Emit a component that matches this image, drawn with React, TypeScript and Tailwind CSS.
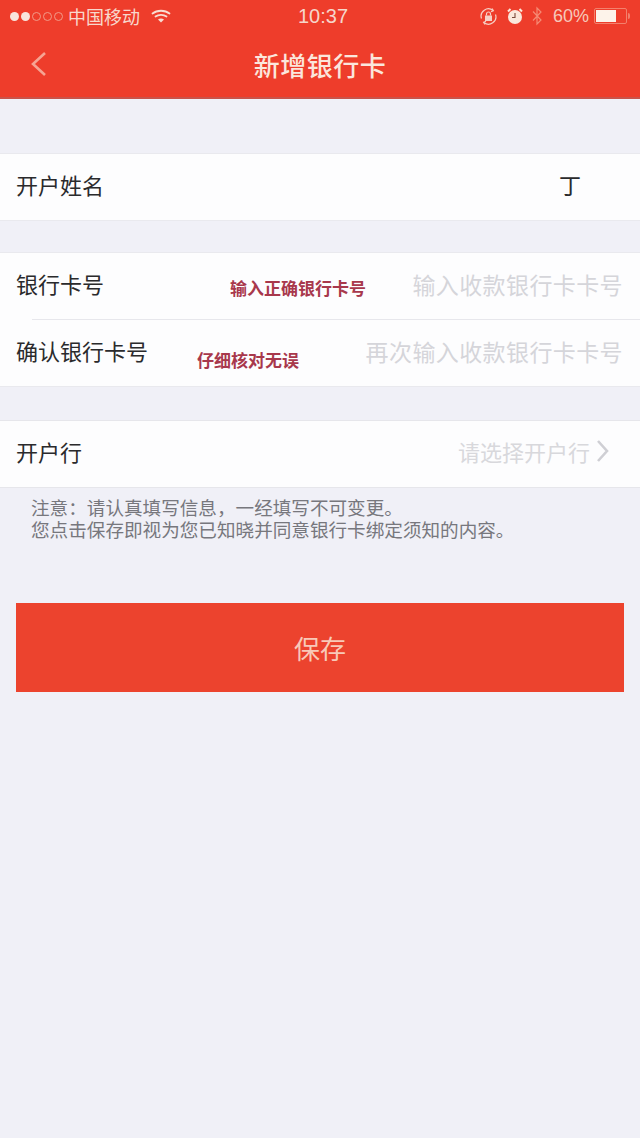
const cjk = { fontFamily: '"Noto Sans CJK SC", "Liberation Sans", sans-serif' };

function Dots() {
  return (
    <div className="flex items-center gap-[2px]">
      {[0, 1].map((i) => (
        <span key={i} className="h-[9px] w-[9px] rounded-full bg-[#f8e4dc]" />
      ))}
      {[2, 3, 4].map((i) => (
        <span key={i} className="h-[9px] w-[9px] rounded-full border border-[#f29a88]" />
      ))}
    </div>
  );
}

function Wifi() {
  return (
    <svg width="20" height="15" viewBox="0 0 20 15" fill="none" stroke="#f8ddd2" strokeWidth="1.8" strokeLinecap="round">
      <path d="M1.5 4.5C6 .8 14 .8 18.5 4.5" />
      <path d="M4.5 7.5C7.5 5.2 12.5 5.2 15.5 7.5" />
      <path d="M10 13.5l-3-3c1.8-1.2 4.2-1.2 6 0z" fill="#f8ddd2" stroke="none" />
    </svg>
  );
}

function RotationLock() {
  return (
    <svg width="19" height="19" viewBox="0 0 19 19" fill="none" stroke="#f6cfc4" strokeWidth="1.2">
      <path d="M2.5 11.5A7.3 7.3 0 0 1 14 3.5" />
      <path d="M16.5 7.5A7.3 7.3 0 0 1 5 15.5" />
      <path d="M13 1.5l1.4 2.2-2.4 1M6 17.5l-1.4-2.2 2.4-1" />
      <rect x="6" y="8.5" width="7" height="5.5" fill="#f6cfc4" stroke="none" />
      <path d="M7.5 8.5V7a2 2 0 0 1 4 0v1.5" />
    </svg>
  );
}

function Alarm() {
  return (
    <svg width="16" height="17" viewBox="0 0 16 17">
      <circle cx="8" cy="9" r="7" fill="#fae8dc" />
      <path d="M1 3.5L3.5 1M15 3.5L12.5 1" stroke="#fae8dc" strokeWidth="2" />
      <path d="M8 5v4.5H5" fill="none" stroke="#7a4a3c" strokeWidth="1.1" />
    </svg>
  );
}

function Bluetooth() {
  return (
    <svg width="10" height="20" viewBox="0 0 10 20" fill="none" stroke="#f58a74" strokeWidth="1.2">
      <path d="M1 5.5l8 8.5-4 4V2l4 4-8 8.5" />
    </svg>
  );
}

function Battery() {
  return (
    <div className="flex items-center gap-[1px]">
      <div className="flex h-[16px] w-[33px] rounded-[2px] border border-[#f3806c] p-[1px]">
        <div className="h-full w-[20px] bg-[#fdf3ea]" />
      </div>
      <div className="h-[6px] w-[2px] rounded-r-sm bg-[#f3806c]" />
    </div>
  );
}

function StatusBar() {
  return (
    <div className="relative flex h-[32px] items-center justify-between pl-[10px] pr-[10px]">
      <div className="flex items-center gap-[5px]">
        <Dots />
        <span className="text-[18px] leading-none text-[#f8d8cc]">中国移动</span>
        <span className="ml-[6px]"><Wifi /></span>
      </div>
      <span className="absolute left-[298px] text-[20px] font-medium leading-none text-[#f6d6ca]" style={{ fontFamily: '"Liberation Sans", sans-serif' }}>
        10:37
      </span>
      <div className="flex items-center">
        <RotationLock />
        <span className="ml-[9px]"><Alarm /></span>
        <span className="ml-[9px]"><Bluetooth /></span>
        <span className="ml-[11px] text-[18px] leading-none text-[#f6c8ba]" style={{ fontFamily: '"Liberation Sans", sans-serif' }}>60%</span>
        <span className="ml-[5px]"><Battery /></span>
      </div>
    </div>
  );
}

function Header() {
  return (
    <header className="h-[99px] border-b-2 border-[#c9534a] bg-[#ee3d2b]">
      <StatusBar />
      <div className="relative flex h-[65px] items-center justify-center">
        <svg className="absolute left-[30px] top-[19px]" width="18" height="26" viewBox="0 0 18 26" fill="none" stroke="#f6a493" strokeWidth="2.6">
          <path d="M15 2L3 13l12 11" />
        </svg>
        <h1 className="text-[26px] font-medium leading-none tracking-[0.5px] text-[#fbe6dc]">新增银行卡</h1>
      </div>
    </header>
  );
}

function Row({ label, value, valueClass, note, noteClass, pr = 'pr-[17px]', chevron }: {
  label: string;
  value: string;
  valueClass: string;
  note?: string;
  noteClass?: string;
  pr?: string;
  chevron?: boolean;
}) {
  return (
    <div className={`relative flex h-[66px] items-center justify-between pb-[6px] pl-[16px] ${pr}`}>
      <span className="text-[22px] leading-none text-[#2a2a2c]">{label}</span>
      {note && <span className={noteClass}>{note}</span>}
      <div className="flex items-center">
        <span className={valueClass}>{value}</span>
        {chevron && (
          <svg className="ml-[6px]" width="14" height="24" viewBox="0 0 14 24" fill="none" stroke="#cfcfd4" strokeWidth="2.6">
            <path d="M2 2l9 10-9 10" />
          </svg>
        )}
      </div>
    </div>
  );
}

export default function App() {
  const placeholder = 'mt-[3px] text-[23px] leading-none tracking-[0.4px] text-[#d5d5da]';
  const annotation = 'absolute text-[17px] font-bold leading-none text-[#a8384c]';
  return (
    <div className="flex min-h-[1138px] w-[640px] flex-col overflow-hidden bg-[#f0f0f7]" style={cjk}>
      <Header />

      <section className="mt-[54px] border-y border-[#e9e9ee] bg-[#fdfdfe]">
        <Row label="开户姓名" value="丁" valueClass="mr-[42px] text-[22px] leading-none text-[#2a2a2c]" />
      </section>

      <section className="mt-[31px] border-y border-[#e9e9ee] bg-[#fdfdfe]">
        <Row
          label="银行卡号"
          value="输入收款银行卡卡号"
          valueClass={placeholder}
          note="输入正确银行卡号"
          noteClass={`${annotation} left-[230px] top-[26px]`}
        />
        <div className="ml-[32px] h-px bg-[#e7e7ec]" />
        <Row
          label="确认银行卡号"
          value="再次输入收款银行卡卡号"
          valueClass={placeholder}
          note="仔细核对无误"
          noteClass={`${annotation} left-[197px] top-[31px]`}
        />
      </section>

      <section className="mt-[33px] border-y border-[#e6e6eb] bg-[#fdfdfe]">
        <Row
          label="开户行"
          value="请选择开户行"
          valueClass="text-[22px] leading-none text-[#d8d8dc]"
          pr="pr-[30px]"
          chevron
        />
      </section>

      <p className="mt-[8px] pl-[31px] text-[18.6px] leading-[22px] text-[#77777d]">
        注意：请认真填写信息，一经填写不可变更。
        <br />
        您点击保存即视为您已知晓并同意银行卡绑定须知的内容。
      </p>

      <button className="mx-[16px] mt-[63px] h-[89px] bg-[#ec432e] text-[26px] text-[#f8c9b8]">保存</button>
    </div>
  );
}
